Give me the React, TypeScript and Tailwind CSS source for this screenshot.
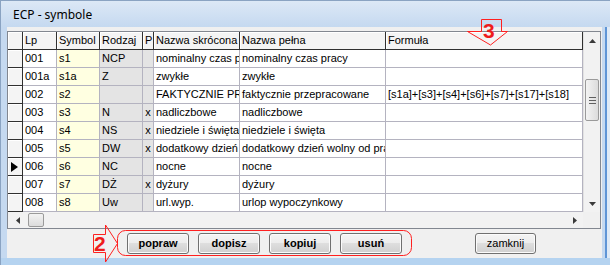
import React from "react";

const cols = [
  { w: "w-[34px]", bg: "bg-white", c: false },
  { w: "w-[43px]", bg: "bg-[#ffffe1]", c: false },
  { w: "w-[43px]", bg: "bg-[#e4e4e4]", c: false },
  { w: "w-[11px]", bg: "bg-[#e4e4e4]", c: true },
  { w: "w-[86px]", bg: "bg-white", c: false },
  { w: "w-[146px]", bg: "bg-white", c: false },
  { w: "w-[197px]", bg: "bg-white", c: false },
];

const headers = ["Lp", "Symbol", "Rodzaj", "P", "Nazwa skrócona", "Nazwa pełna", "Formuła"];

const rows: string[][] = [
  ["001", "s1", "NCP", "", "nominalny czas pracy", "nominalny czas pracy", ""],
  ["001a", "s1a", "Z", "", "zwykłe", "zwykłe", ""],
  ["002", "s2", "", "", "FAKTYCZNIE PRZEPRACOWANE", "faktycznie przepracowane", "[s1a]+[s3]+[s4]+[s6]+[s7]+[s17]+[s18]"],
  ["003", "s3", "N", "x", "nadliczbowe", "nadliczbowe", ""],
  ["004", "s4", "NS", "x", "niedziele i święta", "niedziele i święta", ""],
  ["005", "s5", "DW", "x", "dodatkowy dzień wolny", "dodatkowy dzień wolny od pracy", ""],
  ["006", "s6", "NC", "", "nocne", "nocne", ""],
  ["007", "s7", "DŻ", "x", "dyżury", "dyżury", ""],
  ["008", "s8", "Uw", "", "url.wyp.", "urlop wypoczynkowy", ""],
];

function Btn({ label, bold, w }: { label: string; bold?: boolean; w: string }) {
  return (
    <div
      className={`${w} h-[21px] flex items-center justify-center rounded-[3px] border border-[#707070] bg-[linear-gradient(to_bottom,#f4f4f4_0%,#ececec_50%,#dedede_50%,#d0d0d0_100%)] shadow-[inset_0_0_0_1px_#fbfbfb] text-[11px] text-black ${bold ? "font-bold" : ""}`}
    >
      {label}
    </div>
  );
}

function Tri({ dir }: { dir: "up" | "down" | "left" | "right" }) {
  const pts =
    dir === "up"
      ? "0,4 3.5,0 7,4"
      : dir === "down"
      ? "0,0 7,0 3.5,4"
      : dir === "left"
      ? "4,0 4,7 0,3.5"
      : "0,0 4,3.5 0,7";
  const w = dir === "up" || dir === "down" ? 7 : 4;
  const h = dir === "up" || dir === "down" ? 4 : 7;
  return (
    <svg width={w} height={h} viewBox={`0 0 ${w} ${h}`}>
      <polygon points={pts} fill="#3a3a3a" />
    </svg>
  );
}

export default function App() {
  return (
    <div className="relative w-[610px] h-[265px] overflow-hidden bg-[#c2d7ef] font-['Liberation_Sans',Arial,sans-serif] text-black">
      {/* title bar */}
      <div className="h-[27px] border-t border-l border-[#8aa3c2] bg-[linear-gradient(to_bottom,#dce8f6,#c5d9f0)] flex items-end pl-[12px] pb-[4px]">
        <span className="font-['Noto_Sans',sans-serif] text-[12px] leading-[16px] text-black">ECP - symbole</span>
      </div>
      <div className="flex h-[231px]">
        {/* left frame */}
        <div className="w-[7px] border-l border-[#8aa3c2] bg-[#c5d9f0]" />
        {/* client */}
        <div className="w-[595px] bg-[#f0f0f0] flex flex-col pt-[4px]">
          {/* grid */}
          <div className="w-[594px] h-[198px] border border-[#828790] flex">
            <div className="w-[575px] flex flex-col">
              {/* header */}
              <div className="flex h-[18px]">
                <div className="w-[15px] h-[18px] bg-[#f4f4f4] border-r border-b border-[#303030] shadow-[inset_1px_1px_0_#ffffff]" />
                {cols.map((c, i) => (
                  <div
                    key={i}
                    className={`${c.w} h-[18px] bg-[#f4f4f4] border-r border-b border-[#303030] shadow-[inset_1px_1px_0_#ffffff] flex items-center pl-[2px] text-[11px] whitespace-nowrap overflow-hidden`}
                  >
                    {headers[i]}
                  </div>
                ))}
              </div>
              {/* rows */}
              {rows.map((r, ri) => (
                <div key={ri} className="flex h-[18px]">
                  <div className="w-[15px] h-[18px] bg-[#f4f4f4] border-r border-b border-[#303030] shadow-[inset_1px_1px_0_#ffffff] flex items-center pl-[3px]">
                    {ri === 6 && (
                      <svg width="7" height="10" viewBox="0 0 7 10">
                        <polygon points="0,0 7,5 0,10" fill="#000" />
                      </svg>
                    )}
                  </div>
                  {cols.map((c, ci) => (
                    <div
                      key={ci}
                      className={`${c.w} ${c.bg} h-[18px] border-r border-b border-[#b4b3c0] flex items-center ${c.c ? "justify-center" : "pl-[2px]"} text-[11px] whitespace-nowrap overflow-hidden`}
                    >
                      {r[ci]}
                    </div>
                  ))}
                </div>
              ))}
              {/* horizontal scrollbar */}
              <div className="h-[16px] bg-[#f2f2f2] flex items-center">
                <div className="w-[20px] h-[16px] flex items-center justify-center">
                  <Tri dir="left" />
                </div>
                <div className="w-[16px] h-[14px] rounded-[2px] border border-[#9a9a9a] bg-[linear-gradient(to_bottom,#f3f3f3,#dcdcdc)]" />
                <div className="flex-1" />
                <div className="w-[17px] h-[16px] flex items-center justify-center">
                  <Tri dir="right" />
                </div>
              </div>
            </div>
            {/* vertical scrollbar */}
            <div className="w-[17px] flex flex-col">
              <div className="h-[180px] bg-[#f2f2f2] border-l border-[#e2e2e2] flex flex-col items-center">
                <div className="h-[17px] flex items-center justify-center">
                  <Tri dir="up" />
                </div>
                <div className="h-[30px]" />
                <div className="w-[14px] h-[42px] rounded-[2px] border border-[#9a9a9a] bg-[linear-gradient(to_right,#f3f3f3,#dcdcdc)] flex flex-col items-center justify-center gap-[2px]">
                  <div className="w-[7px] h-px bg-[#606060]" />
                  <div className="w-[7px] h-px bg-[#606060]" />
                  <div className="w-[7px] h-px bg-[#606060]" />
                </div>
                <div className="flex-1" />
                <div className="h-[17px] flex items-center justify-center">
                  <Tri dir="down" />
                </div>
              </div>
              <div className="flex-1 bg-[#f0f0f0]" />
            </div>
          </div>
          {/* buttons */}
          <div className="flex mt-[4px] pl-[120px]">
            <Btn label="popraw" bold w="w-[62px]" />
            <div className="w-[9px]" />
            <Btn label="dopisz" bold w="w-[62px]" />
            <div className="w-[9px]" />
            <Btn label="kopiuj" bold w="w-[62px]" />
            <div className="w-[9px]" />
            <Btn label="usuń" bold w="w-[62px]" />
            <div className="w-[73px]" />
            <Btn label="zamknij" w="w-[61px]" />
          </div>
        </div>
        {/* right frame */}
        <div className="flex-1 bg-[#c5d9f0] flex">
          <div className="w-[3px]" />
          <div className="w-[2px] bg-[#5f95d6]" />
          <div className="flex-1 bg-[#dfeaf6]" />
        </div>
      </div>
      {/* bottom frame */}
      <div className="h-[7px] border-l border-[#8aa3c2] bg-[#b5d3f0]" />

      {/* annotations */}
      <svg className="absolute left-0 top-0 pointer-events-none" width="610" height="265" viewBox="0 0 610 265">
        <polygon
          points="481.5,19.5 501.5,19.5 501.5,31.5 507.5,31.5 490.5,45 467.5,31.5 481.5,31.5"
          fill="none"
          stroke="#ff2020"
          strokeWidth="1"
        />
        <text x="483" y="38" fill="#ee1c1c" fontSize="21" fontWeight="bold" fontFamily="Liberation Sans, Arial, sans-serif">3</text>
        <polygon
          points="93.5,234.5 105.5,234.5 105.5,225 117.5,243.5 105.5,262 105.5,252.5 93.5,252.5"
          fill="none"
          stroke="#ff2020"
          strokeWidth="1"
        />
        <text x="94" y="251" fill="#ee1c1c" fontSize="21" fontWeight="bold" fontFamily="Liberation Sans, Arial, sans-serif">2</text>
        <rect x="117.5" y="230.5" width="294" height="25" rx="8" ry="8" fill="none" stroke="#ff2020" strokeWidth="1" />
      </svg>
    </div>
  );
}
